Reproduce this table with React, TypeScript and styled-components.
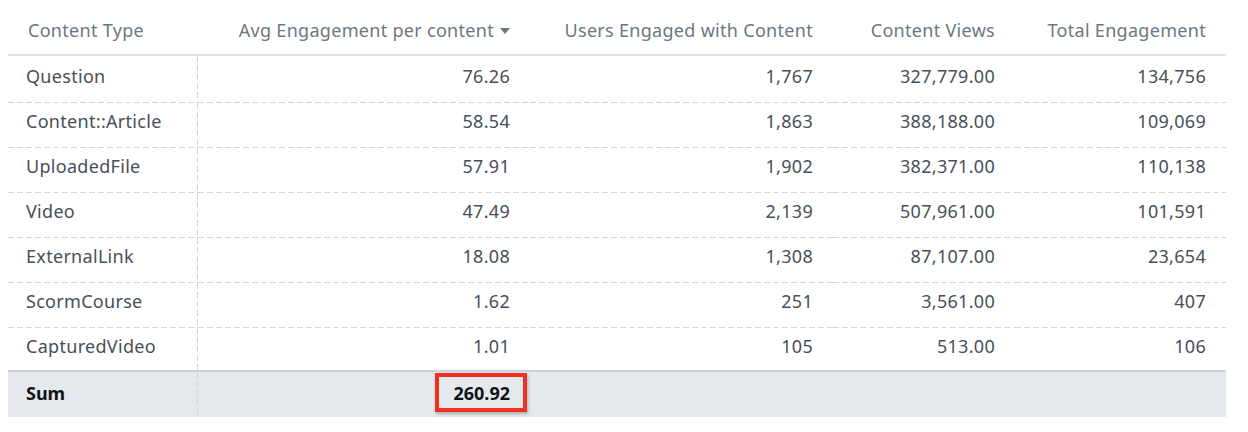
import styled, { createGlobalStyle } from "styled-components"

const GlobalStyle = createGlobalStyle`
  body {
    margin: 8px;
    background: #ffffff;
    font-family: "Noto Sans", "Open Sans", sans-serif;
  }
`

const DASH = "#cfd6dd"

const Table = styled.table`
  width: 1218px;
  table-layout: fixed;
  border-collapse: separate;
  border-spacing: 0;
  font-size: 18px;
  line-height: 20px;
  letter-spacing: 0.3px;
`

const HeadRow = styled.tr`
  height: 48px;
`

const HeadCell = styled.th<{ $align?: "left" | "right" }>`
  padding: 0 20px 2px;
  text-align: ${(p) => p.$align ?? "right"};
  font-weight: 400;
  color: #6c7782;
  white-space: nowrap;
  border-bottom: 2px solid #dfe3e8;
  vertical-align: middle;
`

const SortArrow = styled.span`
  display: inline-block;
  width: 0;
  height: 0;
  margin-left: 6px;
  vertical-align: 3px;
  border-left: 5px solid transparent;
  border-right: 5px solid transparent;
  border-top: 6px solid #6c7782;
`

const Row = styled.tr`
  height: 45px;

  td {
    padding-top: 8px;
    padding-bottom: 0;
    background-image: linear-gradient(to right, ${DASH} 6px, transparent 6px);
    background-size: 9px 1px;
    background-repeat: repeat-x;
    background-position: left bottom;
  }
  td:first-child {
    background-image: linear-gradient(to right, ${DASH} 6px, transparent 6px),
      linear-gradient(to bottom, ${DASH} 6px, transparent 6px);
    background-size: 9px 1px, 1px 9px;
    background-repeat: repeat-x, repeat-y;
    background-position: left bottom, right top;
  }
  &:first-child {
    height: 47px;
  }
  &:first-child td {
    padding-top: 10px;
  }
  &:last-child {
    height: 42px;
  }
  &:last-child td {
    background-image: none;
  }
  &:last-child td:first-child {
    background-image: linear-gradient(to bottom, ${DASH} 6px, transparent 6px);
    background-size: 1px 9px;
    background-repeat: repeat-y;
    background-position: right top;
  }
`

const Cell = styled.td<{ $align?: "left" | "right" }>`
  padding-left: ${(p) => (p.$align === "left" ? "18px" : "20px")};
  padding-right: 20px;
  text-align: ${(p) => p.$align ?? "right"};
  color: #474f58;
  white-space: nowrap;
  vertical-align: top;
`

const TotalRow = styled.tr`
  height: 47px;

  td {
    padding-top: 11px;
    padding-bottom: 0;
    font-weight: 700;
    letter-spacing: 0;
    color: #111417;
    background-color: #e5e8ec;
    border-top: 2px solid #cbd2da;
  }
  td:first-child {
    background-image: linear-gradient(to bottom, ${DASH} 6px, transparent 6px);
    background-size: 1px 9px;
    background-repeat: repeat-y;
    background-position: right top;
  }
`

const Highlight = styled.span`
  position: relative;
  display: inline-block;

  &::after {
    content: "";
    position: absolute;
    right: -17px;
    width: 92px;
    top: -10px;
    bottom: -9px;
    box-sizing: border-box;
    border: 4px solid #f0301f;
    box-shadow: 1px 2px 3px rgba(0, 0, 0, 0.25);
    pointer-events: none;
  }
`

type Item = {
  type: string
  avg: string
  users: string
  views: string
  total: string
}

const rows: Item[] = [
  { type: "Question", avg: "76.26", users: "1,767", views: "327,779.00", total: "134,756" },
  { type: "Content::Article", avg: "58.54", users: "1,863", views: "388,188.00", total: "109,069" },
  { type: "UploadedFile", avg: "57.91", users: "1,902", views: "382,371.00", total: "110,138" },
  { type: "Video", avg: "47.49", users: "2,139", views: "507,961.00", total: "101,591" },
  { type: "ExternalLink", avg: "18.08", users: "1,308", views: "87,107.00", total: "23,654" },
  { type: "ScormCourse", avg: "1.62", users: "251", views: "3,561.00", total: "407" },
  { type: "CapturedVideo", avg: "1.01", users: "105", views: "513.00", total: "106" },
]

const App = () => {
  return (
    <>
      <GlobalStyle />
      <Table>
        <colgroup>
          <col style={{ width: 190 }} />
          <col style={{ width: 332 }} />
          <col style={{ width: 303 }} />
          <col style={{ width: 182 }} />
          <col style={{ width: 211 }} />
        </colgroup>
        <thead>
          <HeadRow>
            <HeadCell $align="left">Content Type</HeadCell>
            <HeadCell>
              Avg Engagement per content
              <SortArrow />
            </HeadCell>
            <HeadCell>Users Engaged with Content</HeadCell>
            <HeadCell>Content Views</HeadCell>
            <HeadCell>Total Engagement</HeadCell>
          </HeadRow>
        </thead>
        <tbody>
          {rows.map((r) => (
            <Row key={r.type}>
              <Cell $align="left">{r.type}</Cell>
              <Cell>{r.avg}</Cell>
              <Cell>{r.users}</Cell>
              <Cell>{r.views}</Cell>
              <Cell>{r.total}</Cell>
            </Row>
          ))}
        </tbody>
        <tfoot>
          <TotalRow>
            <Cell $align="left">Sum</Cell>
            <Cell>
              <Highlight>260.92</Highlight>
            </Cell>
            <Cell />
            <Cell />
            <Cell />
          </TotalRow>
        </tfoot>
      </Table>
    </>
  )
}

export default App
